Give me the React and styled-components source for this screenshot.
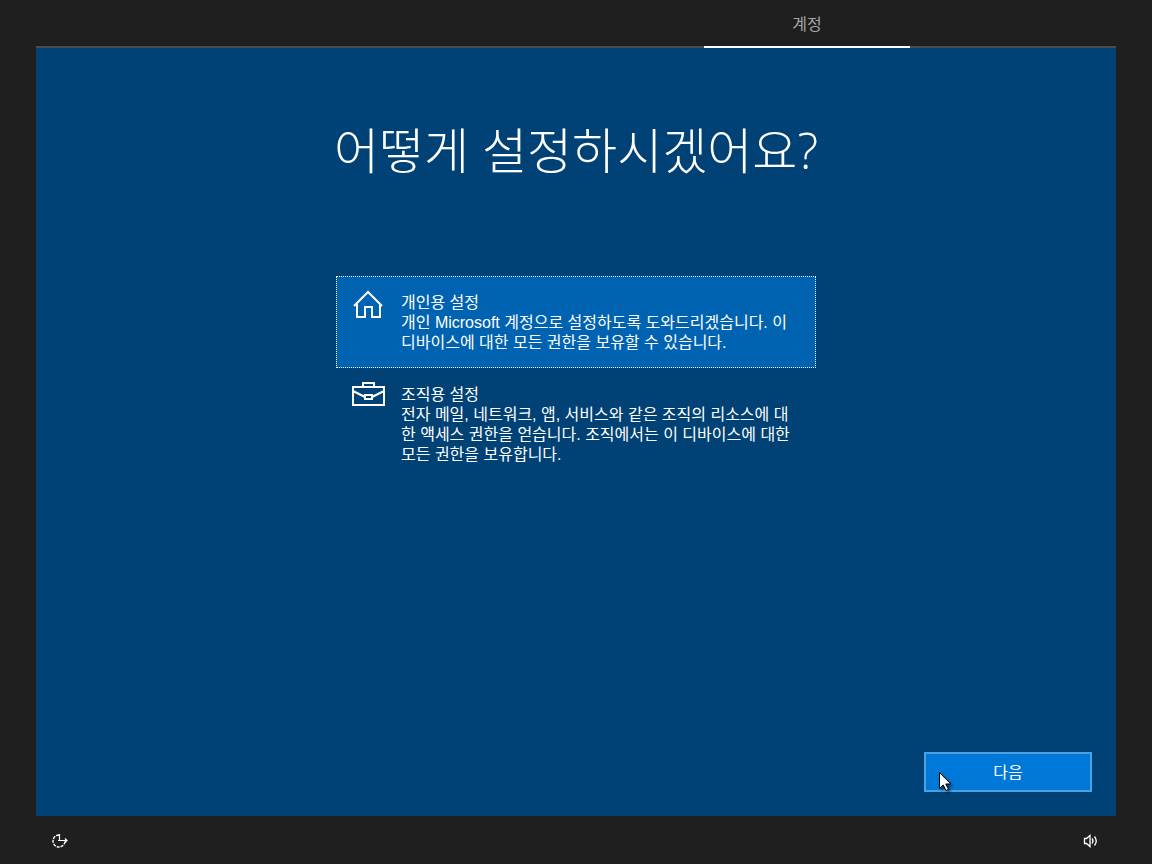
import { useState } from 'react';
import styled, { createGlobalStyle } from 'styled-components';

const GlobalStyle = createGlobalStyle`
  * {
    box-sizing: border-box;
  }

  body {
    margin: 0;
    background-color: #1f1f1f;
    color: #fff;
    font-family: 'Liberation Sans', 'Noto Sans CJK KR', sans-serif;
    font-size: 16px;
    line-height: 20px;
  }
`;

const Page = styled.div`
  display: flex;
  flex-direction: column;
  min-height: 100vh;
  padding: 0 36px;
`;

const Steps = styled.nav`
  display: grid;
  grid-template-columns: 334fr 103fr 103fr;
  height: 48px;
`;

const Step = styled.div`
  display: flex;
  align-items: center;
  justify-content: center;
  padding-top: 4px;
  color: #a6a6a6;
  border-bottom: 2px solid ${(props) => (props.$active ? '#fff' : '#4c4c4c')};
`;

const Panel = styled.main`
  display: flex;
  flex: 1;
  flex-direction: column;
  align-items: center;
  padding: 68px 24px 24px;
  background-color: #004275;
`;

const Title = styled.h1`
  margin: 0 0 92px;
  font-family: 'Open Sans', 'Noto Sans CJK KR', sans-serif;
  font-size: 49px;
  font-weight: 300;
  line-height: 68px;
  text-align: center;
`;

const Options = styled.div`
  display: flex;
  flex-direction: column;
  width: 100%;
  max-width: 480px;
`;

const Option = styled.label`
  display: flex;
  gap: 16px;
  padding: 13px 16px 14px 15px;
  border: 1px dotted ${(props) => (props.$selected ? '#fff' : 'transparent')};
  background-color: ${(props) => (props.$selected ? '#0063b1' : 'transparent')};
  cursor: default;
`;

const Radio = styled.input`
  position: absolute;
  opacity: 0;
  pointer-events: none;
`;

const IconBox = styled.span`
  flex: none;
  width: 33px;
  height: 30px;
`;

const OptionText = styled.span`
  display: flex;
  flex: 1;
  flex-direction: column;
  padding-top: 3px;
`;

const Actions = styled.div`
  display: flex;
  align-self: stretch;
  justify-content: flex-end;
  margin-top: auto;
`;

const NextButton = styled.button`
  position: relative;
  width: 168px;
  height: 40px;
  padding: 2px 0 0;
  border: 2px solid #4da1e3;
  background-color: #0078d7;
  color: #fff;
  font: inherit;
  cursor: default;
`;

const Pointer = styled.svg`
  position: absolute;
  top: 17px;
  left: 12px;
  filter: drop-shadow(2px 2px 1px rgba(0, 0, 0, 0.5));
`;

const Footer = styled.footer`
  display: flex;
  align-items: center;
  justify-content: space-between;
  height: 48px;
  padding: 2px 17px 0 15px;
`;

const IconButton = styled.button`
  display: flex;
  padding: 0;
  border: none;
  background-color: transparent;
  color: #fff;
`;

const HomeIcon = () => (
  <svg width="33" height="30" fill="none" stroke="#fff" strokeWidth="2">
    <path d="M2 16 16 2l14 14M5 14v13h8V17h7v10h8V14" />
  </svg>
);

const BriefcaseIcon = () => (
  <svg width="33" height="30" fill="none" stroke="#fff" strokeWidth="2">
    <path d="M1 5h31v18H1zM11 5V1h11v4M1 9l12 6M32 9l-12 6M13 13h7v4h-7z" />
  </svg>
);

const AccessIcon = () => (
  <svg width="20" height="16" fill="none" stroke="#fff">
    <path d="M8 2a6 6 0 1 0 6 6" strokeWidth="1.400" strokeDasharray="3 1" />
    <path d="M8.500 1v7M7 7.500h9M14 5.500l2 2-2 2" strokeWidth="1.200" />
  </svg>
);

const VolumeIcon = () => (
  <svg width="16" height="16" fill="none" stroke="#fff" strokeWidth="1.300">
    <path d="M1.500 5.500h2L7 2.500v11l-3.500-3h-2z" />
    <path d="M9 5.500q2 2.500 0 5M11.500 3.500q3.500 4.500 0 9" />
  </svg>
);

const options = [
  {
    id: 'personal',
    title: '개인용 설정',
    text: '개인 Microsoft 계정으로 설정하도록 도와드리겠습니다. 이 디바이스에 대한 모든 권한을 보유할 수 있습니다.',
    Icon: HomeIcon,
  },
  {
    id: 'organization',
    title: '조직용 설정',
    text: '전자 메일, 네트워크, 앱, 서비스와 같은 조직의 리소스에 대한 액세스 권한을 얻습니다. 조직에서는 이 디바이스에 대한 모든 권한을 보유합니다.',
    Icon: BriefcaseIcon,
  },
];

const App = () => {
  const [selected, setSelected] = useState('personal');

  return (
    <Page lang="ko">
      <GlobalStyle />
      <Steps>
        <Step />
        <Step $active>계정</Step>
        <Step />
      </Steps>
      <Panel>
        <Title>어떻게 설정하시겠어요?</Title>
        <Options role="radiogroup">
          {options.map(({ id, title, text, Icon }) => (
            <Option key={id} $selected={selected === id}>
              <Radio
                type="radio"
                name="setup"
                value={id}
                checked={selected === id}
                onChange={() => setSelected(id)}
              />
              <IconBox>
                <Icon />
              </IconBox>
              <OptionText>
                <span>{title}</span>
                <span>{text}</span>
              </OptionText>
            </Option>
          ))}
        </Options>
        <Actions>
          <NextButton type="button">
            다음
            <Pointer width="16" height="22" viewBox="0 0 16 22">
              <path
                d="M1.500 1.500v16l3.700-3.500 2.800 5.500 2.500-1.200-2.700-5.300h5z"
                fill="#fff"
                stroke="#000"
              />
            </Pointer>
          </NextButton>
        </Actions>
      </Panel>
      <Footer>
        <IconButton type="button" aria-label="접근성">
          <AccessIcon />
        </IconButton>
        <IconButton type="button" aria-label="볼륨">
          <VolumeIcon />
        </IconButton>
      </Footer>
    </Page>
  );
};

export default App;
